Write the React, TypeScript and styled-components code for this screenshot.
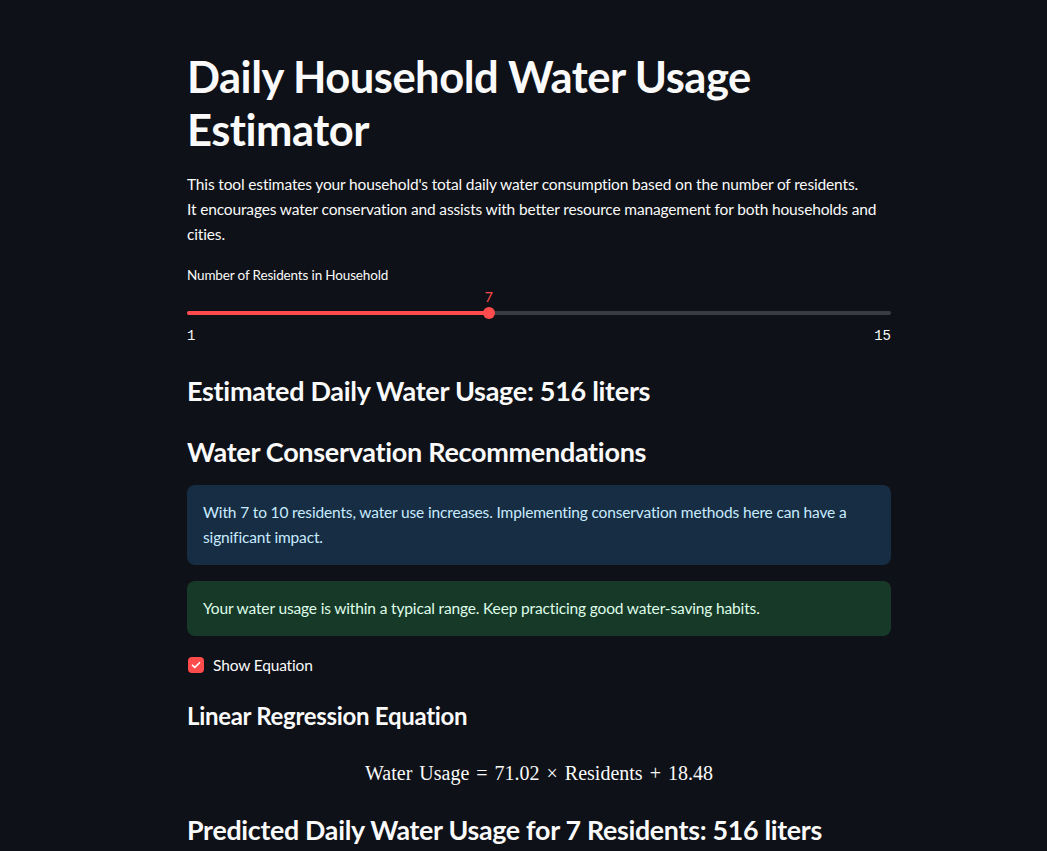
import React from "react";
import styled, { createGlobalStyle } from "styled-components";

const Global = createGlobalStyle`
  html, body { margin: 0; padding: 0; background: #0e1117; }
  body { font-family: Lato, "Noto Sans", sans-serif; color: #fafafa; }
  * { box-sizing: border-box; }
`;

const Page = styled.div`
  min-height: 851px;
  display: flex;
  justify-content: center;
  padding-left: 31px;
  padding-top: 50px;
  overflow: hidden;
`;

const Column = styled.main`
  width: 704px;
  display: flex;
  flex-direction: column;
`;

const Title = styled.h1`
  margin: 0;
  font-size: 43.5px;
  line-height: 53px;
  font-weight: 700;
  letter-spacing: -0.5px;
`;

const Intro = styled.p`
  margin: 16px 0 0;
  font-size: 15.5px;
  line-height: 25px;
  letter-spacing: -0.15px;
`;

const SliderBlock = styled.div`
  margin-top: 18px;
  display: flex;
  flex-direction: column;
`;

const Label = styled.label`
  font-size: 13.5px;
  line-height: 20px;
  letter-spacing: -0.15px;
`;

const TrackArea = styled.div`
  position: relative;
  height: 38px;
  display: flex;
  align-items: flex-end;
  padding-bottom: 8px;
`;

const Track = styled.div`
  position: relative;
  width: 100%;
  height: 4px;
  border-radius: 2px;
  background: #3a3b43;
`;

const Fill = styled.div`
  position: absolute;
  left: 0;
  top: 0;
  height: 100%;
  border-radius: 2px;
  background: #ff4b4b;
`;

const Thumb = styled.div`
  position: absolute;
  top: 50%;
  width: 12px;
  height: 12px;
  border-radius: 50%;
  background: #ff4b4b;
  transform: translate(-50%, -50%);
`;

const ThumbValue = styled.div`
  position: absolute;
  bottom: 10px;
  transform: translateX(-50%);
  color: #ff4b4b;
  font-size: 14px;
  line-height: 16px;
`;

const Ticks = styled.div`
  display: flex;
  justify-content: space-between;
  font-family: "Liberation Mono", "DejaVu Sans Mono", monospace;
  font-size: 14px;
  line-height: 20px;
  margin-top: 3px;
`;

const Heading = styled.h3<{ $size: number; $mt: number }>`
  margin: ${(p) => p.$mt}px 0 0;
  font-size: ${(p) => p.$size}px;
  line-height: ${(p) => Math.round(p.$size * 1.2)}px;
  font-weight: 700;
  letter-spacing: -0.3px;
`;

const Alert = styled.div<{ $kind: "info" | "success" }>`
  margin-top: ${(p) => (p.$kind === "info" ? 17 : 16)}px;
  padding: 15px 16px;
  border-radius: 8px;
  font-size: 15.5px;
  line-height: 25px;
  letter-spacing: -0.15px;
  background: ${(p) => (p.$kind === "info" ? "#172d43" : "#173928")};
  color: ${(p) => (p.$kind === "info" ? "#c7ebff" : "#dffde9")};
`;

const CheckRow = styled.label`
  margin-top: 17px;
  display: flex;
  align-items: center;
  gap: 9px;
  font-size: 15.5px;
  line-height: 24px;
  letter-spacing: -0.15px;
`;

const Box = styled.span`
  width: 16px;
  height: 16px;
  border-radius: 4px;
  background: #ff4b4b;
  display: flex;
  align-items: center;
  justify-content: center;
  margin-left: 1px;
`;

const Equation = styled.div`
  margin-top: 31px;
  text-align: center;
  font-family: "Liberation Serif", "DejaVu Serif", serif;
  font-size: 20px;
  line-height: 24px;
  word-spacing: 2px;
`;

export default function App() {
  const value = 7;
  const pct = ((value - 1) / (15 - 1)) * 100;
  return (
    <>
      <Global />
      <Page>
        <Column>
          <Title>Daily Household Water Usage Estimator</Title>
          <Intro>
            This tool estimates your household's total daily water consumption based on the number of residents.
            <br />
            It encourages water conservation and assists with better resource management for both households and
            cities.
          </Intro>
          <SliderBlock>
            <Label>Number of Residents in Household</Label>
            <TrackArea>
              <Track>
                <Fill style={{ width: `${pct}%` }} />
                <Thumb style={{ left: `${pct}%` }} />
                <ThumbValue style={{ left: `${pct}%` }}>{value}</ThumbValue>
              </Track>
            </TrackArea>
            <Ticks>
              <span>1</span>
              <span>15</span>
            </Ticks>
          </SliderBlock>
          <Heading $size={27} $mt={29}>Estimated Daily Water Usage: 516 liters</Heading>
          <Heading $size={27} $mt={29}>Water Conservation Recommendations</Heading>
          <Alert $kind="info">
            With 7 to 10 residents, water use increases. Implementing conservation methods here can have a
            significant impact.
          </Alert>
          <Alert $kind="success">
            Your water usage is within a typical range. Keep practicing good water-saving habits.
          </Alert>
          <CheckRow>
            <Box>
              <svg width="12" height="12" viewBox="0 0 24 24" fill="none" stroke="#fff" strokeWidth="3.5" strokeLinecap="round" strokeLinejoin="round">
                <path d="M5 12.5l4.5 4.5L19 7.5" />
              </svg>
            </Box>
            Show Equation
          </CheckRow>
          <Heading $size={24} $mt={24}>Linear Regression Equation</Heading>
          <Equation>Water Usage = 71.02 × Residents + 18.48</Equation>
          <Heading $size={26.8} $mt={29}>Predicted Daily Water Usage for 7 Residents: 516 liters</Heading>
        </Column>
      </Page>
    </>
  );
}
